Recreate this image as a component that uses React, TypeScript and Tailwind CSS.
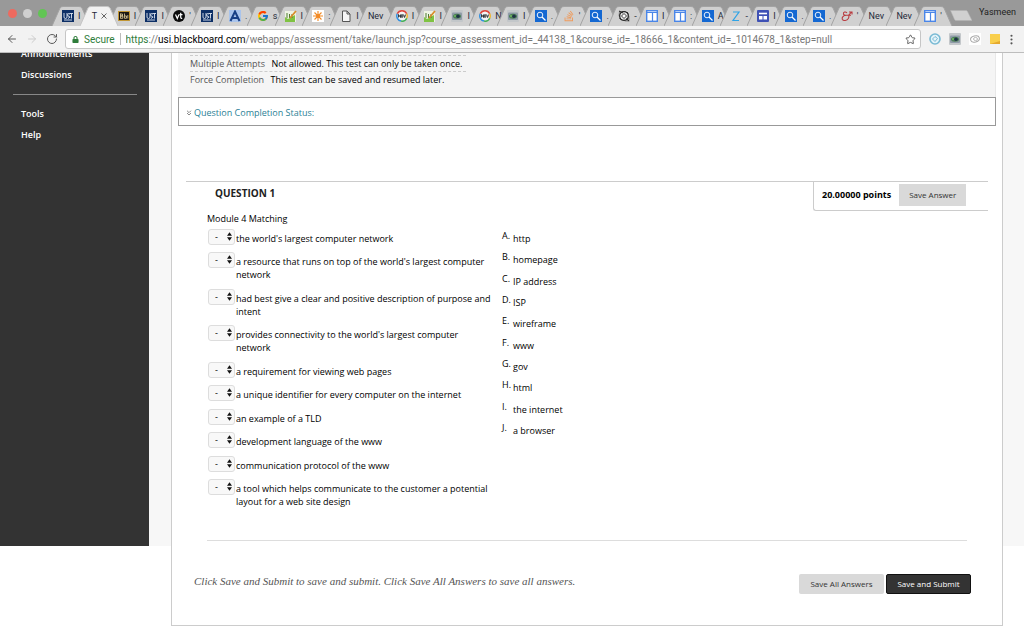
import { Fragment, type ReactNode } from 'react';
import { ArrowLeft, ArrowRight, ChevronsDown, MoreVertical, RotateCw, Star } from 'lucide-react';
import { FaLock, FaStackOverflow } from 'react-icons/fa';
import { FcGoogle } from 'react-icons/fc';

type IconName =
  | 'usi'
  | 'bb'
  | 'vt'
  | 'a'
  | 'google'
  | 'pencil'
  | 'spark'
  | 'file'
  | 'nov'
  | 'eye'
  | 'search'
  | 'stack'
  | 'diamond'
  | 'window'
  | 'z'
  | 'form'
  | 'amp'
  | 'none';

type Tab = { icon: IconName; title: string };

const tabs: Tab[] = [
  { icon: 'usi', title: 'I' },
  { icon: 'none', title: 'T' },
  { icon: 'bb', title: 'I' },
  { icon: 'usi', title: 'I' },
  { icon: 'vt', title: "'" },
  { icon: 'usi', title: 'I' },
  { icon: 'a', title: '.' },
  { icon: 'google', title: 's' },
  { icon: 'pencil', title: 'I' },
  { icon: 'spark', title: ':' },
  { icon: 'file', title: 'I' },
  { icon: 'none', title: 'Nev' },
  { icon: 'nov', title: 'I' },
  { icon: 'pencil', title: 'I' },
  { icon: 'eye', title: 'I' },
  { icon: 'nov', title: 'N' },
  { icon: 'eye', title: 'I' },
  { icon: 'search', title: '.' },
  { icon: 'stack', title: "'" },
  { icon: 'search', title: '.' },
  { icon: 'diamond', title: '-' },
  { icon: 'window', title: 'I' },
  { icon: 'window', title: ':' },
  { icon: 'search', title: 'A' },
  { icon: 'z', title: '-' },
  { icon: 'form', title: 'I' },
  { icon: 'search', title: '.' },
  { icon: 'search', title: '.' },
  { icon: 'amp', title: "'" },
  { icon: 'none', title: 'Nev' },
  { icon: 'none', title: 'Nev' },
  { icon: 'window', title: "'" },
];

const prompts = [
  "the world's largest computer network",
  "a resource that runs on top of the world's largest computer network",
  'had best give a clear and positive description of purpose and intent',
  "provides connectivity to the world's largest computer network",
  'a requirement for viewing web pages',
  'a unique identifier for every computer on the internet',
  'an example of a TLD',
  'development language of the www',
  'communication protocol of the www',
  'a tool which helps communicate to the customer a potential layout for a web site design',
];

const answers = [
  'http',
  'homepage',
  'IP address',
  'ISP',
  'wireframe',
  'www',
  'gov',
  'html',
  'the internet',
  'a browser',
];

const letters = 'ABCDEFGHIJ'.split('');

function Svg({ children }: { children: ReactNode }) {
  return (
    <svg viewBox="0 0 12 12" className="size-3 shrink-0" aria-hidden="true">
      {children}
    </svg>
  );
}

function EyeIcon() {
  return (
    <Svg>
      <rect width="12" height="12" rx="1" fill="#c3c7ca" />
      <rect x="1" y="2.500" width="10" height="7.500" rx="1" fill="#8f9ba8" />
      <ellipse cx="6" cy="6.2" rx="4" ry="2.500" fill="#4b7f55" />
      <circle cx="7" cy="6.2" r="1.800" fill="#1d3146" />
      <circle cx="4" cy="6" r="1.100" fill="#6fb562" />
    </Svg>
  );
}

function TabIcon({ name }: { name: IconName }) {
  switch (name) {
    case 'usi':
      return (
        <Svg>
          <rect width="12" height="12" fill="#0d2f66" />
          <path d="M2 3v4q0 1.500 1.500 1.500T5 7V3M8 4Q5.500 3 5.500 4.700T7.500 6.500 6 8.500M7.500 3.500H11M9.500 3.500v5M2 10h8" fill="none" stroke="#dfe6f2" strokeWidth=".9" />
        </Svg>
      );
    case 'bb':
      return (
        <Svg>
          <rect x=".5" y="1.500" width="11" height="9" fill="#1b1712" stroke="#c99a2e" strokeWidth=".9" />
          <path d="M2.500 3.500v5M2.500 4h2v2h-2M2.500 6h2.300v2.300H2.500M6.500 3.500v4.800h2V6h-2M9.800 5v3.500" fill="none" stroke="#e6d3a0" strokeWidth=".8" />
        </Svg>
      );
    case 'vt':
      return (
        <Svg>
          <circle cx="6" cy="6" r="6" fill="#0c0c0c" />
          <path d="M2.500 4.500 4.300 8.500 6 4.500M7.700 2.800v4.500q0 1.200 1.500 1M6.500 4.700h3" fill="none" stroke="#fff" strokeWidth="1.200" />
        </Svg>
      );
    case 'a':
      return (
        <Svg>
          <rect width="12" height="12" fill="#a9c4ec" />
          <path d="M1.500 11 6 1.500 10.500 11M3.500 8h5" fill="none" stroke="#173f86" strokeWidth="2" />
        </Svg>
      );
    case 'google':
      return <FcGoogle className="size-3 shrink-0" />;
    case 'pencil':
      return (
        <Svg>
          <rect y="1" width="11" height="11" fill="#eef3e4" />
          <path d="M0 7 3 9 10 5v7H0z" fill="#7fc242" />
          <path d="M2 3v5M4.500 4v4M7 4v4" stroke="#4d7d2e" />
          <path d="M5 8 11 1" stroke="#d98c2b" strokeWidth="1.800" />
        </Svg>
      );
    case 'spark':
      return (
        <Svg>
          <rect width="12" height="12" fill="#fff" />
          <path d="M6 1v10M1 6h10M2.500 2.500l7 7M9.500 2.500l-7 7" stroke="#f28a24" strokeWidth="1.100" />
          <circle cx="6" cy="6" r="2" fill="#f28a24" />
        </Svg>
      );
    case 'file':
      return (
        <Svg>
          <path d="M2.500 1h4.500l3 3v7.500H2.500zM7 1v3h3" fill="#f5f5f5" stroke="#555" />
        </Svg>
      );
    case 'nov':
      return (
        <Svg>
          <circle cx="6" cy="6" r="5.200" fill="#f4f4f4" />
          <path d="M1.300 3.800A5.200 5.200 0 0 1 10.700 3.800" fill="none" stroke="#e0443a" strokeWidth="1.500" />
          <path d="M10.700 3.800A5.200 5.200 0 0 1 10.700 8.200" fill="none" stroke="#f0b429" strokeWidth="1.500" />
          <path d="M1.300 3.800A5.200 5.200 0 0 0 5 11.100" fill="none" stroke="#2f8fe0" strokeWidth="1.500" />
          <path d="M5 11.100A5.200 5.200 0 0 0 10.700 8.200" fill="none" stroke="#3fae54" strokeWidth="1.500" />
          <path d="M2.500 7.500v-3l2 3v-3M5.300 4.800h1.500v2.400H5.300zM7.600 4.500l1 3 1-3" fill="none" stroke="#26292d" strokeWidth=".9" />
        </Svg>
      );
    case 'eye':
      return <EyeIcon />;
    case 'search':
      return (
        <Svg>
          <rect width="12" height="12" fill="#1468d2" />
          <circle cx="5" cy="5" r="2.800" fill="#1468d2" stroke="#fff" strokeWidth=".9" />
          <path d="m7 7 3.500 3.500" stroke="#fff" strokeWidth="1.200" />
        </Svg>
      );
    case 'stack':
      return <FaStackOverflow className="size-3 shrink-0 text-[#ef9a5b]" />;
    case 'diamond':
      return (
        <Svg>
          <path d="M1 1h4l6.500 5v5.500H7L.5 6z" fill="#8a8a8a" />
          <circle cx="6" cy="6" r="4.300" fill="#e8e8e8" stroke="#222" strokeWidth="1.200" />
          <path d="m3.500 6 2.500-2.500L8.500 6 6 8.500z" fill="#fff" stroke="#222" strokeWidth=".9" />
          <path d="M1 1l4 2M11 11 8 8.500M9 2l1.500 2.500M1.500 8l2.500 2.500" stroke="#222" strokeWidth="1" />
        </Svg>
      );
    case 'window':
      return (
        <Svg>
          <rect x=".7" y=".7" width="10.600" height="10.600" fill="#fff" stroke="#4a86e8" strokeWidth="1.400" />
          <path d="M1 2.500h10M6.500 3v8" stroke="#4a86e8" strokeWidth="1.200" />
        </Svg>
      );
    case 'z':
      return (
        <Svg>
          <path d="M3 2h6L3 10.500h6" fill="none" stroke="#2ea3e6" strokeWidth="1.200" />
        </Svg>
      );
    case 'form':
      return (
        <Svg>
          <rect width="12" height="12" rx="1" fill="#3f51b5" />
          <path d="M2 3.500h8" stroke="#fff" strokeWidth="1.600" />
          <path d="M2 6h3.500v3.500H2zM6.500 6H10v3.500H6.500z" fill="#fff" />
        </Svg>
      );
    case 'amp':
      return (
        <Svg>
          <path
            d="M6 3C4.500 1.200 2 2 2.500 4c.3 1 1.500 1.500 2.500 1.300C2.500 5.500.5 7.500 1.300 9.300c1 2 4.700 1.500 6-.8.8-1.500.7-3 .2-3M4.500 5.300h5.500M7.500 5.300l3-3.300M8 2h3v2.500"
            fill="none"
            stroke="#b8383d"
            strokeWidth="1.100"
          />
        </Svg>
      );
    default:
      return null;
  }
}

function BrowserTab({ tab, active }: { tab: Tab; active: boolean }) {
  return (
    <button
      type="button"
      className={`relative flex h-5 min-w-0 flex-1 items-center pl-[10px] ${active ? 'z-10' : ''}`}
    >
      <svg
        viewBox="0 0 38 20"
        preserveAspectRatio="none"
        className="absolute inset-y-0 left-0 h-5 w-[38px]"
        aria-hidden="true"
      >
        <path
          d="M0 20 8 2Q9 .5 11 .5H27Q29 .5 30 2L38 20"
          fill={active ? '#f2f2f2' : '#d0d0d0'}
          stroke={active ? '#c4c4c4' : '#a3a3a3'}
          strokeWidth="1"
        />
      </svg>
      <span className="relative flex items-center gap-1 text-[9px] leading-3 text-gray-800">
        <TabIcon name={tab.icon} />
        <span className={`whitespace-nowrap ${active ? 'pl-[2px]' : ''}`}>{tab.title}</span>
        {active && (
          <svg viewBox="0 0 6 6" className="size-[6px]" aria-hidden="true">
            <path d="m.5.5 5 5m0-5-5 5" stroke="#555" strokeWidth=".9" />
          </svg>
        )}
      </span>
    </button>
  );
}

function TabStrip() {
  return (
    <div className="flex h-[26px] items-end bg-[#999]">
      <div className="flex h-full w-[52px] items-center gap-[6px] pt-px pl-2">
        <span className="size-[9px] rounded-full bg-[#ee6a5f]" />
        <span className="size-[9px] rounded-full bg-[#d0d0d0]" />
        <span className="size-[9px] rounded-full bg-[#61c554]" />
      </div>
      <nav className="flex min-w-0 flex-1" aria-label="Tabs">
        {tabs.map((tab, i) => (
          <BrowserTab key={i} tab={tab} active={i === 1} />
        ))}
      </nav>
      <div className="flex h-full w-[82px] items-center justify-between pr-2 pl-2">
        <button type="button" aria-label="New tab" className="pt-1">
          <svg viewBox="0 0 22 11" className="h-[11px] w-[22px]">
            <path d="M.5.500H16q1 0 1.500 1L22 10.500H6q-1 0-1.500-1z" fill="#d0d0d0" stroke="#b2b2b2" strokeWidth=".5" />
          </svg>
        </button>
        <span className="pb-px text-[9px] text-[#222]">Yasmeen</span>
      </div>
    </div>
  );
}

function Toolbar() {
  return (
    <div className="flex h-[27px] items-center border-b border-[#bdbdbd] bg-[#f2f2f2] pr-[6px] pl-[6px]">
      <div className="flex w-[59px] items-center gap-2 text-[#5a5a5a]">
        <button type="button" aria-label="Back">
          <ArrowLeft size={12} />
        </button>
        <button type="button" aria-label="Forward" className="text-[#ccc]">
          <ArrowRight size={12} />
        </button>
        <button type="button" aria-label="Reload">
          <RotateCw size={12} />
        </button>
      </div>
      <div className="flex h-5 min-w-0 flex-1 items-center rounded-[3px] border border-[#c6c6c6] bg-white pr-1 pl-[6px] text-[10px]">
        <FaLock size={7} className="mr-[5px] shrink-0 text-[#2f7d3b]" />
        <span className="text-[#2f7d3b]">Secure</span>
        <span className="mx-[5px] h-3 w-px shrink-0 bg-[#bbb]" />
        <span className="min-w-0 flex-1 overflow-hidden whitespace-nowrap text-[#777]">
          <span className="text-[#2f7d3b]">https</span>://<span className="text-black">usi.blackboard.com</span>
          /webapps/assessment/take/launch.jsp?course_assessment_id=_44138_1&amp;course_id=_18666_1&amp;content_id=_1014678_1&amp;step=null
        </span>
        <button type="button" aria-label="Bookmark this page">
          <Star size={11} className="text-[#555]" />
        </button>
      </div>
      <div className="flex items-center gap-2 pl-2">
        <svg viewBox="0 0 12 12" className="size-3" aria-hidden="true">
          <circle cx="6" cy="6" r="5" fill="#e4f3f9" stroke="#79bad4" strokeWidth="1.600" />
          <path d="M3.500 6 6 3.500l2.500 2L6 8.500z" fill="none" stroke="#79bad4" />
        </svg>
        <EyeIcon />
        <svg viewBox="0 0 12 12" className="size-3" aria-hidden="true">
          <rect width="12" height="12" fill="#fff" />
          <ellipse cx="6" cy="6" rx="4.500" ry="3" fill="none" stroke="#aaa" transform="rotate(-15 6 6)" />
          <ellipse cx="6.500" cy="6" rx="2" ry="1.500" fill="none" stroke="#bbb" />
        </svg>
        <svg viewBox="0 0 12 12" className="size-3" aria-hidden="true">
          <rect x="1" y="1" width="10" height="10" fill="#f9cf4c" />
          <path d="M1 11 11 8v3z" fill="#e5a92e" />
        </svg>
      </div>
      <button type="button" aria-label="Menu" className="ml-1">
        <MoreVertical size={13} strokeWidth={2} className="text-[#555]" />
      </button>
    </div>
  );
}

function Sidebar() {
  return (
    <aside className="h-[493px] w-[149px] shrink-0 overflow-hidden bg-[#333] pr-3 pl-[13px] leading-4 font-semibold text-white">
      <nav className="-mt-[7px]">
        <div className="flex flex-col gap-[5px] pl-2">
          <a href="#announcements">Announcements</a>
          <a href="#discussions">Discussions</a>
        </div>
        <hr className="my-[11px] border-[#888]" />
        <div className="flex flex-col gap-[5px] pl-2">
          <a href="#tools">Tools</a>
          <a href="#help">Help</a>
        </div>
      </nav>
    </aside>
  );
}

function TestInfo() {
  return (
    <div className="flex h-11 flex-col items-start border-r border-[#e8e8e8] bg-[#f5f5f5] pt-[2px] pl-3 leading-[15px]">
      <p className="border-y border-dashed border-[#ccc] pr-1">
        <span className="mr-1 text-[#555]">Multiple Attempts</span> Not allowed. This test can only be taken once.
      </p>
      <p>
        <span className="mr-1 text-[#555]">Force Completion</span> This test can be saved and resumed later.
      </p>
    </div>
  );
}

function MatchRow({ index, text }: { index: number; text: string }) {
  const id = `match-${index}`;
  return (
    <li className="flex items-start">
      <div className="relative mr-px h-4 w-[27px] shrink-0">
        <select
          id={id}
          className="block h-4 w-full appearance-none rounded-[3px] border border-[#ddd] bg-[#f8f8f8] pl-[6px] leading-3 text-black"
        >
          <option>-</option>
          {letters.map((letter) => (
            <option key={letter}>{letter}</option>
          ))}
        </select>
        <svg viewBox="0 0 6 10" className="pointer-events-none absolute top-[3px] right-[3px] h-[9px] w-[5px]" aria-hidden="true">
          <path d="M3 0 6 4H0zM3 10 0 6h6z" fill="#111" />
        </svg>
      </div>
      <label htmlFor={id} className="pt-[3px] pr-2 leading-[13px]">
        {text}
      </label>
    </li>
  );
}

function Question() {
  return (
    <section className="mx-2 mt-[55px] border-t border-[#ccc]">
      <div className="flex items-start justify-between">
        <h2 className="pt-[3px] pl-[29px] text-[10px] leading-4 font-bold text-[#222]">QUESTION 1</h2>
        <div className="flex h-[29px] w-[175px] items-center gap-2 rounded-bl-[3px] border-b border-l border-[#ccc] pb-[2px] pl-2">
          <span className="font-bold whitespace-nowrap">20.00000 points</span>
          <button type="button" className="h-[22px] w-[67px] bg-[#d9d9d9] text-[8px] text-[#333]">
            Save Answer
          </button>
        </div>
      </div>
      <div className="mx-[21px] border-b border-[#ddd] pb-8">
        <p className="leading-4">Module 4 Matching</p>
        <div className="mt-[2px] flex">
          <ol className="flex min-h-[279px] w-[295px] shrink-0 flex-col justify-between pl-px">
            {prompts.map((text, i) => (
              <MatchRow key={text} index={i} text={text} />
            ))}
          </ol>
          <dl className="grid h-[210px] grid-cols-[11px_auto] content-between leading-4">
            {answers.map((text, i) => (
              <Fragment key={text}>
                <dt className="leading-[14px]">{letters[i]}.</dt>
                <dd className="pt-[2px]">{text}</dd>
              </Fragment>
            ))}
          </dl>
        </div>
      </div>
    </section>
  );
}

export default function App() {
  return (
    <div className="min-h-screen overflow-hidden bg-white font-['Open_Sans','Noto_Sans',sans-serif] text-[9px] text-black">
      <header className="font-['Roboto','Inter',sans-serif]">
        <TabStrip />
        <Toolbar />
      </header>
      <div className="flex items-start">
        <Sidebar />
        <div className="h-[493px] w-[22px] shrink-0 bg-[#f7f7f7]" />
        <main className="min-w-0 flex-1 border border-t-0 border-[#ccc] bg-white px-[6px] pb-[31px]">
          <TestInfo />
          <div className="flex h-[29px] items-center gap-px border border-[#999] pt-[2px] pl-[6px] text-[#2b7f96]">
            <ChevronsDown size={8} strokeWidth={3} className="text-[#888]" />
            <a href="#status">Question Completion Status:</a>
          </div>
          <Question />
          <footer className="mt-[33px] flex items-start justify-between pr-[25px] pl-4">
            <p className="font-['Liberation_Serif',serif] text-[11px] leading-[14px] text-[#555] italic">
              Click Save and Submit to save and submit. Click Save All Answers to save all answers.
            </p>
            <div className="flex gap-[2px] text-[8px]">
              <button type="button" className="h-5 w-[85px] rounded-xs bg-[#d9d9d9] text-[#333]">
                Save All Answers
              </button>
              <button type="button" className="h-5 w-[85px] rounded-xs border border-[#111] bg-[#333] text-white">
                Save and Submit
              </button>
            </div>
          </footer>
        </main>
        <div className="h-[493px] w-[21px] shrink-0 bg-[#f7f7f7]" />
      </div>
    </div>
  );
}
